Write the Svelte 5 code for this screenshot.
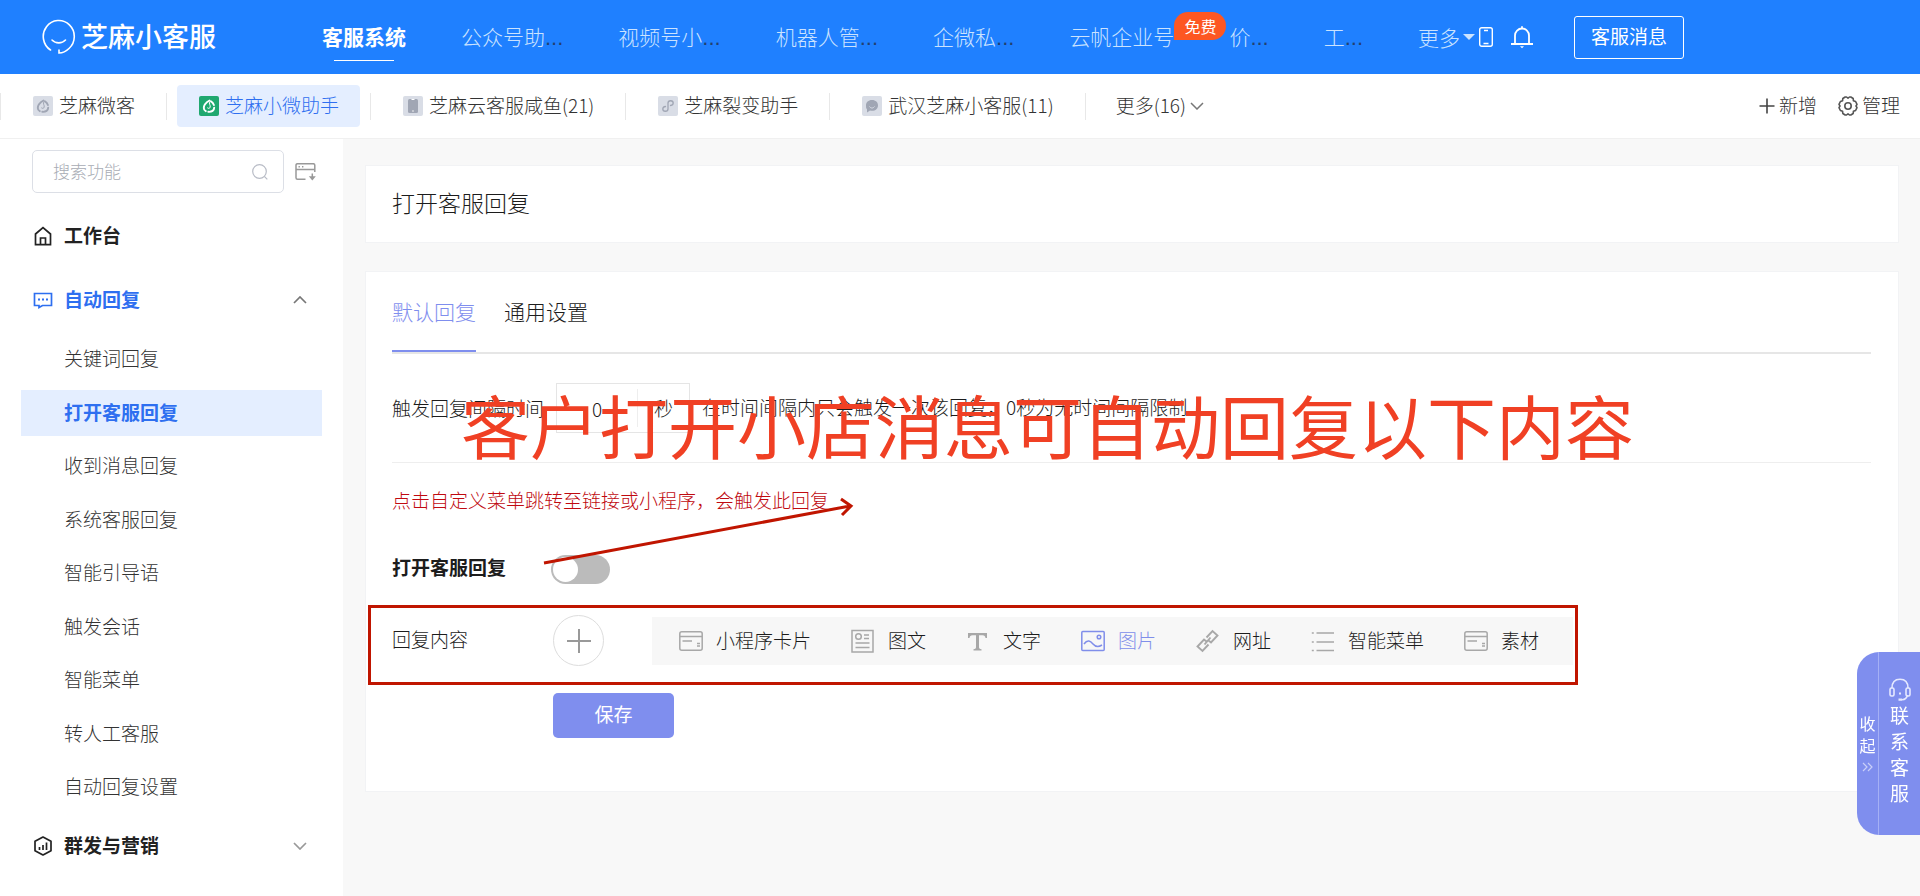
<script lang="ts">
  const navItems = [
    { label: "公众号助", cut: true },
    { label: "视频号小", cut: true },
    { label: "机器人管", cut: true },
    { label: "企微私", cut: true },
    { label: "云帆企业号", cut: false, badge: "免费" },
    { label: "价", cut: true },
    { label: "工", cut: true },
  ];

  const accounts = [
    { name: "芝麻微客", icon: "mini" },
    { name: "芝麻小微助手", icon: "mini" },
    { name: "芝麻云客服咸鱼(21)", icon: "phone" },
    { name: "芝麻裂变助手", icon: "program" },
    { name: "武汉芝麻小客服(11)", icon: "chat" },
  ];

  const replyMenu = [
    "关键词回复",
    "打开客服回复",
    "收到消息回复",
    "系统客服回复",
    "智能引导语",
    "触发会话",
    "智能菜单",
    "转人工客服",
    "自动回复设置",
  ];

  const contentTypes = [
    { label: "小程序卡片", icon: "card" },
    { label: "图文", icon: "article" },
    { label: "文字", icon: "text" },
    { label: "图片", icon: "image" },
    { label: "网址", icon: "link" },
    { label: "智能菜单", icon: "list" },
    { label: "素材", icon: "card" },
  ];

  let activeAccount = $state("芝麻小微助手");
  let activeMenu = $state("打开客服回复");
  let activeTab = $state("默认回复");
  let activeType = $state("图片");
  let replyOpen = $state(true);
  let enabled = $state(false);
  let interval = $state("0");
</script>

<header class="topbar">
  <a class="logo" href="#home">
    <svg width="34" height="40" viewBox="0 0 34 40" fill="none" stroke="#fff" stroke-width="1.6" stroke-linecap="round">
      <path d="M8.500 33A15.500 16 0 1 1 27 31.500C24.500 34 21 36 17 36v-3" />
      <path d="M10 23c3.500 3.800 10 3.800 13.500 0" />
    </svg>
    <span>芝麻小客服</span>
  </a>
  <nav class="main-nav">
    <a class="nav-item current" href="#service">客服系统</a>
    {#each navItems as item}
      <a class="nav-item" href="#nav">{item.label}{#if item.cut}<span class="dots">...</span>{/if}{#if item.badge}<span class="badge">{item.badge}</span>{/if}</a>
    {/each}
    <button class="nav-item more">更多<span class="caret"></span></button>
  </nav>
  <button class="icon-btn phone-btn" aria-label="手机">
    <svg width="14" height="20" viewBox="0 0 14 20" fill="none" stroke="#fff" stroke-width="1.400">
      <rect x=".7" y=".7" width="12.600" height="18.600" rx="2" /><path d="M5 3.500h4M4.500 16.500h5" />
    </svg>
  </button>
  <button class="icon-btn bell-btn" aria-label="通知">
    <svg width="22" height="23" viewBox="0 0 22 23" fill="none" stroke="#fff" stroke-width="1.800">
      <path d="M0 18h22M4 18V9.500a7 7 0 0 1 14 0V18M11 .3v2" /><path d="M9 20.300h4l-2 2z" fill="#fff" stroke="none" />
    </svg>
  </button>
  <button class="message-btn">客服消息</button>
</header>

<div class="account-bar">
  <div class="accounts">
    {#each accounts as account}
      <div class="account-cell">
        <button class="account" class:active={activeAccount === account.name} onclick={() => (activeAccount = account.name)}>
          <svg class="account-icon" width="20" height="20" viewBox="0 0 20 20">
            <rect class="tile" width="20" height="20" rx="2" />
            {#if account.icon === "mini"}
              <g class="mark" fill="none" stroke-width="1.900" stroke-linecap="round">
                <path d="M10.500 4.500C7 6.500 4.800 9.500 4.800 12c0 1.500.8 2.600 2 3.200" />
                <path d="M9.300 15.800c3.500.3 5.900-1.300 5.900-4.200M14.900 9c-.6-1.700-1.600-2.800-3-3.700" />
                <path d="M11 5.500c-1.600 2.600.6 3.300.2 5.600-.3 1.300-1.700 1.700-2.600.9" stroke-width="1" />
              </g>
            {:else if account.icon === "phone"}
              <rect class="solid" x="5" y="3" width="10" height="14" rx="1.500" /><path d="M8.500 3.500h3M9.200 15h1.600" stroke="#fff" />
            {:else if account.icon === "program"}
              <path class="mark" d="M7.500 10.500c-1.700.2-2.700 1.200-2.700 2.500 0 3 5.200 3 5.200 0V7c0-3 5.200-3 5.200 0 0 1.300-1 2.300-2.700 2.500" fill="none" stroke-width="1.300" stroke-linecap="round" />
            {:else}
              <path class="solid" d="M10 4c3.700 0 6 2.400 6 5.400s-2.300 5.400-6 5.400c-.8 0-1.300-.1-2-.3L5 16.500v-3.200A5.400 5.400 0 0 1 4 9.400C4 6.400 6.300 4 10 4z" />
              <path d="M7.500 10.500c1.200 2 3.800 2 5 0" fill="none" stroke="#d9dde6" />
            {/if}
          </svg>
          <span>{account.name}</span>
        </button>
      </div>
    {/each}
    <div class="account-cell">
      <button class="account more-accounts"><span>更多(16)</span><svg width="14" height="8" viewBox="0 0 14 8" fill="none" stroke="#777" stroke-width="1.500"><path d="M1 1l6 6 6-6" /></svg></button>
    </div>
  </div>
  <div class="account-actions">
    <button><svg width="16" height="16" viewBox="0 0 16 16" stroke="#444" stroke-width="1.600"><path d="M8 .5v15M.5 8h15" /></svg><span>新增</span></button>
    <button>
      <svg width="20" height="20" viewBox="0 0 20 20" fill="none" stroke="#555" stroke-width="1.600" stroke-linejoin="round">
        <path d="M7.200 1h1.300l1.500 1.200L11.500 1h1.300l2.400 1.500.2 2.200 2.200.8L19 8.300l-1 1.700 1 1.700-1.400 2.800-2.200.8-.2 2.200-2.400 1.500h-1.300L10 17.800 8.500 19H7.200l-2.400-1.500-.2-2.200-2.200-.8L1 11.700 2 10 1 8.300l1.400-2.800 2.200-.8.2-2.200z" />
        <circle cx="10" cy="10" r="3.200" />
      </svg><span>管理</span>
    </button>
  </div>
</div>

<div class="layout">
  <aside class="sidebar">
    <div class="search-row">
      <label class="search">
        <input type="text" placeholder="搜索功能" aria-label="搜索功能" />
        <svg width="16" height="16" viewBox="0 0 16 16" fill="none" stroke="#b8bcc6" stroke-width="1.200"><circle cx="7.500" cy="7.500" r="6.800" /><path d="M12.300 12.300l3 3" /></svg>
      </label>
      <button class="icon-btn" aria-label="收起菜单">
        <svg width="21" height="18" viewBox="0 0 21 18" fill="none" stroke="#999" stroke-width="1.500">
          <path d="M10.500 16.300H2.500a1.500 1.500 0 0 1-1.500-1.500V2.200A1.500 1.500 0 0 1 2.500.7h15.800a1.500 1.500 0 0 1 1.500 1.500V9M1 6.500h18.800M3.500 3.700h1.400M7 3.700h1.400" />
          <path d="M17.300 10.500v5" /><path d="M13.800 13.300h7L17.300 17.500z" fill="#999" stroke="none" />
        </svg>
      </button>
    </div>

    <a class="group" href="#workbench">
      <svg width="20" height="20" viewBox="0 0 20 20" fill="none" stroke="#222" stroke-width="1.700"><path d="M2.500 8L10 1.500 17.500 8v10.700h-15zM7.500 18.500V12h5v6.500" /></svg>
      <span>工作台</span>
    </a>
    <button class="group open" onclick={() => (replyOpen = !replyOpen)}>
      <svg width="20" height="20" viewBox="0 0 20 20" fill="none" stroke="#2e6ff0" stroke-width="1.700"><path d="M1.500 3.500h17v12h-9L6 17.500v-2H1.500z" /><path d="M5 9.500h2M9 9.500h2M13 9.500h2" stroke-width="2" /></svg>
      <span>自动回复</span>
      <svg class="chevron" width="14" height="8" viewBox="0 0 14 8" fill="none" stroke="#777" stroke-width="1.700"><path d="M1 7l6-6 6 6" /></svg>
    </button>
    {#if replyOpen}
      <div class="submenu">
        {#each replyMenu as entry}
          <a class="sub-item" class:active={activeMenu === entry} href="#menu" onclick={() => (activeMenu = entry)}>{entry}</a>
        {/each}
      </div>
    {/if}
    <button class="group">
      <svg width="20" height="20" viewBox="0 0 20 20" fill="none" stroke="#222" stroke-width="1.700" stroke-linejoin="round"><path d="M10 1l8 4.300v9.400L10 19l-8-4.300V5.300zM6.500 11v3M10 9v5M13.500 6.500V14" /></svg>
      <span>群发与营销</span>
      <svg class="chevron" width="14" height="8" viewBox="0 0 14 8" fill="none" stroke="#999" stroke-width="1.700"><path d="M1 1l6 6 6-6" /></svg>
    </button>
  </aside>

  <main class="content">
    <section class="card title-card"><h1>打开客服回复</h1></section>

    <section class="card">
      <div class="tabs" role="tablist">
        {#each ["默认回复", "通用设置"] as tab}
          <button role="tab" aria-selected={activeTab === tab} class="tab" class:active={activeTab === tab} onclick={() => (activeTab = tab)}>{tab}</button>
        {/each}
      </div>

      <div class="interval-row">
        <label for="interval">触发回复间隔时间</label>
        <div class="interval-box">
          <input id="interval" type="text" bind:value={interval} />
          <span>秒</span>
        </div>
        <span class="hint">在时间间隔内只会触发一次该回复，0秒为无时间间隔限制</span>
      </div>

      <p class="notice">点击自定义菜单跳转至链接或小程序，会触发此回复</p>

      <div class="form-row switch-row">
        <label class="row-label strong" for="enabled">打开客服回复</label>
        <input id="enabled" class="switch" type="checkbox" role="switch" bind:checked={enabled} />
      </div>

      <div class="form-row">
        <span class="row-label">回复内容</span>
        <button class="add-btn" aria-label="添加"><svg width="24" height="24" viewBox="0 0 24 24" stroke="#999" stroke-width="2"><path d="M12 0v24M0 12h24" /></svg></button>
        <div class="types">
          {#each contentTypes as type}
            <button class="type" class:active={activeType === type.label} onclick={() => (activeType = type.label)}>
              <svg width="24" height="24" viewBox="0 0 24 24" fill="none" stroke="currentColor" stroke-width="1.500">
                {#if type.icon === "card"}
                  <rect x=".8" y="2.800" width="22.400" height="18.400" rx="2" /><path d="M1 7.500h22M3.500 12H13M18 14.500h3M18 17h3" />
                {:else if type.icon === "article"}
                  <path d="M1 1.500h21v21.500H1z" /><circle cx="7.500" cy="7.500" r="2.800" /><path d="M13 6h5M13 9.500h5M4.500 14h14M4.500 18.500h14" />
                {:else if type.icon === "text"}
                  <path d="M2 4h19v5h-1.500c-.3-2-1-2.800-3-2.800H13V18c0 1.500.5 2 2.500 2.200V21.500h-8v-1.300C9.500 20 10 19.500 10 18V6.200H6.500c-2 0-2.700.8-3 2.800H2z" fill="currentColor" stroke="none" />
                {:else if type.icon === "image"}
                  <rect x=".8" y="2.500" width="22.400" height="19" rx="1" /><circle cx="18" cy="8" r="1.800" /><path d="M3 15c3.500-5 6.500-3 9 0s5 3.500 9 1" />
                {:else if type.icon === "link"}
                  <path d="M10.500 8.500l6-6.500 5 4.500-6.500 7-2.500-2M12.500 15.500l-6 6.500-5-4.500 6.500-7 2.500 2M8.500 15.500l6-7" stroke-width="1.900" />
                {:else}
                  <path d="M5.500 4H23M5.500 13H23M5.500 21.500H23M.8 4h2M.8 13h2M.8 21.500h2" />
                {/if}
              </svg>
              <span>{type.label}</span>
            </button>
          {/each}
        </div>
      </div>

      <button class="save-btn">保存</button>

      <svg class="marks" width="1220" height="430" viewBox="0 0 1220 430" fill="none" stroke="#c01500" stroke-width="3" aria-hidden="true">
        <rect x="3.500" y="334.500" width="1207" height="77" />
        <path d="M178 291L484 234M475 227l10 7-9 9" />
      </svg>
      <p class="caption">客户打开小店消息可自动回复以下内容</p>
    </section>
  </main>
</div>

<div class="contact">
  <button class="fold"><span>收</span><span>起</span>
    <svg width="12" height="10" viewBox="0 0 12 10" fill="none" stroke="#c9cff8" stroke-width="1.200"><path d="M1 1l4 4-4 4M6 1l4 4-4 4" /></svg>
  </button>
  <button class="service">
    <svg width="22" height="24" viewBox="0 0 22 24" fill="none" stroke="#e6e9ff" stroke-width="1.600">
      <path d="M3 10C3 4.500 6 1.200 11 1.200S19 4.500 19 10M18.500 17c-.5 2.800-2.500 4.500-5.500 4.700" />
      <rect x="1" y="10" width="4" height="8" rx="1.500" /><rect x="17" y="10" width="4" height="8" rx="1.500" /><path d="M9.500 21.700h3.500M10 15.500h2" stroke-width="2.200" />
    </svg>
    <span>联</span><span>系</span><span>客</span><span>服</span>
  </button>
</div>

<style>
  :global(body) {
    margin: 0;
    background: #f8f8f8;
    color: #1c1c1c;
    font-family: "Noto Sans CJK SC", "Noto Sans", sans-serif;
    font-weight: 300;
    font-size: 19px;
    line-height: 28px;
  }

  button {
    padding: 0;
    border: 0;
    background: none;
    font: inherit;
    color: inherit;
    cursor: pointer;
  }

  a { color: inherit; text-decoration: none; }
  svg { flex: none; }
  button, a, h1, label { white-space: nowrap; }

  .topbar {
    display: flex;
    align-items: center;
    height: 74px;
    padding-left: 42px;
    background: #1f80ff;
    color: #fff;
  }

  .logo { display: flex; align-items: center; gap: 5px; width: 280px; font-size: 27px; font-weight: 500; }
  .logo span { padding-bottom: 2px; }
  .main-nav { display: flex; gap: 55px; font-size: 21px; }
  .nav-item { position: relative; line-height: 46px; color: #cbe3ff; }
  .nav-item.current { color: #fff; font-weight: 700; }

  .nav-item.current::after {
    content: "";
    position: absolute;
    left: 12px;
    right: 12px;
    bottom: 0;
    height: 1px;
    background: #fff;
  }

  .dots { color: #24406e; font-family: "Liberation Sans", sans-serif; font-size: 22px; }

  .badge {
    position: absolute;
    top: -1px;
    left: 100%;
    padding: 0 10px;
    border-radius: 14px 14px 14px 0;
    background: #fd5722;
    color: #fff;
    font-size: 16px;
    line-height: 28px;
    font-weight: 400;
    z-index: 1;
  }

  .more { display: flex; align-items: center; gap: 3px; }
  .caret { border: 6px solid transparent; border-top-color: #cbe3ff; border-bottom: 0; }
  .icon-btn { display: flex; align-items: center; }
  .phone-btn { margin-left: 4px; }
  .bell-btn { margin-left: 18px; }

  .message-btn {
    height: 43px;
    margin-left: 41px;
    padding: 0 16px 2px;
    border: 1px solid #fff;
    border-radius: 3px;
    font-weight: 400;
  }

  .account-bar {
    display: flex;
    align-items: center;
    justify-content: space-between;
    height: 64px;
    padding-right: 20px;
    border-bottom: 1px solid #f0f0f0;
    background: #fff;
  }

  .accounts, .account-cell, .account, .account-actions, .account-actions button { display: flex; align-items: center; }
  .account-cell::before { content: ""; width: 1px; height: 27px; background: #e8e8e8; }
  .account { gap: 6px; height: 42px; margin: 0 10px; padding: 0 21px 0 22px; border-radius: 4px; color: #333; }
  .account span, .account-actions span { padding-bottom: 2px; }
  .account.active { background: #e4eeff; color: #2e6ff0; }
  .account.more-accounts { padding: 0 20px; gap: 4px; }
  .tile { fill: #d9dde6; }
  .mark { stroke: #a0a6b4; }
  .solid { fill: #a0a6b4; }
  .active .tile { fill: #20a870; }
  .active .mark { stroke: #fff; }
  .account-actions { gap: 21px; color: #333; }
  .account-actions button { gap: 4px; }

  .layout { display: flex; min-height: calc(100vh - 139px); }
  .sidebar { flex: none; box-sizing: border-box; width: 343px; background: #fff; }
  .search-row { display: flex; align-items: center; gap: 11px; margin-bottom: 11px; padding: 11px 0 0 32px; }

  .search {
    display: flex;
    align-items: center;
    box-sizing: border-box;
    width: 252px;
    height: 43px;
    padding: 0 15px 0 20px;
    border: 1px solid #dcdfe6;
    border-radius: 5px;
  }

  .search input {
    flex: 1;
    min-width: 0;
    padding: 0 0 2px;
    border: 0;
    outline: 0;
    background: none;
    font: inherit;
    font-size: 17px;
  }

  .search input::placeholder { color: #a8acb4; opacity: 1; }

  .group {
    display: flex;
    align-items: center;
    gap: 11px;
    box-sizing: border-box;
    width: 100%;
    height: 64px;
    padding: 0 36px 0 33px;
    color: #222;
    font-weight: 700;
  }

  .group span { padding-bottom: 2px; }
  .group.open { color: #2e6ff0; }
  .chevron { margin-left: auto; }

  .submenu {
    display: flex;
    flex-direction: column;
    justify-content: space-between;
    height: 474px;
    margin: 4px 21px;
  }

  .sub-item { padding: 0 0 2px 43px; line-height: 44px; color: #333; }
  .sub-item.active { background: #e4eeff; color: #2e6ff0; font-weight: 700; }

  .content { flex: 1; min-width: 0; padding: 26px 21px 0 22px; }
  .card { position: relative; padding: 0 27px 53px 26px; border: 1px solid #f2f3f5; background: #fff; }
  .title-card { margin-bottom: 28px; padding-bottom: 4px; }
  h1 { margin: 0; font-size: 23px; font-weight: 300; line-height: 72px; }

  .tabs { display: flex; gap: 28px; border-bottom: 2px solid #e6e6e6; }
  .tab { height: 80px; border-bottom: 2px solid transparent; font-size: 21px; }
  .tab.active { border-bottom-color: #7f8eee; color: #7f8eee; }

  .interval-row { display: flex; align-items: center; height: 108px; border-bottom: 1px solid #eee; }

  .interval-box {
    display: flex;
    align-items: center;
    box-sizing: border-box;
    height: 50px;
    margin: 0 12px;
    border: 1px solid #e5e5e5;
  }

  .interval-box input {
    width: 80px;
    height: 38px;
    padding: 0;
    border: 0;
    border-right: 1px solid #eee;
    outline: 0;
    font: inherit;
    color: inherit;
    text-align: center;
  }

  .interval-box span { padding: 0 16px; }
  .hint { padding-bottom: 2px; }

  .notice { margin: 23px 0 0; color: #c00a10; }
  .switch-row { height: 80px; margin: 15px 0 6px; }
  .form-row { display: flex; align-items: center; }
  .row-label { width: 161px; padding-bottom: 4px; }
  .row-label.strong { font-weight: 700; }

  .switch {
    appearance: none;
    width: 59px;
    height: 29px;
    margin: 0 0 0 -2px;
    border-radius: 15px;
    background: #bbb;
    cursor: pointer;
  }

  .switch::before {
    content: "";
    display: block;
    width: 25px;
    height: 25px;
    margin: 2px;
    border-radius: 50%;
    background: #fff;
  }

  .switch:checked { background: #7f8eee; }
  .switch:checked::before { margin-left: 32px; }

  .add-btn {
    display: flex;
    align-items: center;
    justify-content: center;
    box-sizing: border-box;
    width: 51px;
    height: 51px;
    border: 1px solid #ddd;
    border-radius: 50%;
  }

  .types { display: flex; gap: 40px; margin-left: 48px; padding: 0 34px 0 27px; background: #f7f7f7; }
  .type { display: flex; align-items: center; gap: 13px; height: 48px; }
  .type span { padding-bottom: 2px; }
  .type svg { color: #a8a8a8; }
  .type.active, .type.active svg { color: #808eea; }

  .save-btn {
    display: block;
    width: 121px;
    height: 45px;
    margin: 27px 0 0 161px;
    padding-bottom: 4px;
    border-radius: 5px;
    background: #7f8eee;
    color: #fff;
    font-weight: 400;
  }

  .marks { position: absolute; top: 0; left: 0; pointer-events: none; }

  .caption {
    position: absolute;
    top: 102px;
    left: 95px;
    margin: 0;
    color: #f04024;
    font-size: 69px;
    font-weight: 400;
    line-height: 100px;
    white-space: nowrap;
    pointer-events: none;
  }

  .contact {
    position: fixed;
    right: 0;
    top: 652px;
    display: flex;
    height: 183px;
    border-radius: 22px 0 0 22px;
    background: #7f8eee;
    color: #fff;
    overflow: hidden;
  }

  .contact button { display: flex; flex-direction: column; align-items: center; justify-content: center; padding-bottom: 4px; font-weight: 400; }
  .fold { width: 22px; border-right: 1px solid #a5b0f5; font-size: 16px; line-height: 22px; }
  .fold svg { margin-top: 6px; }
  .service { width: 41px; font-size: 19px; line-height: 26px; }
</style>
